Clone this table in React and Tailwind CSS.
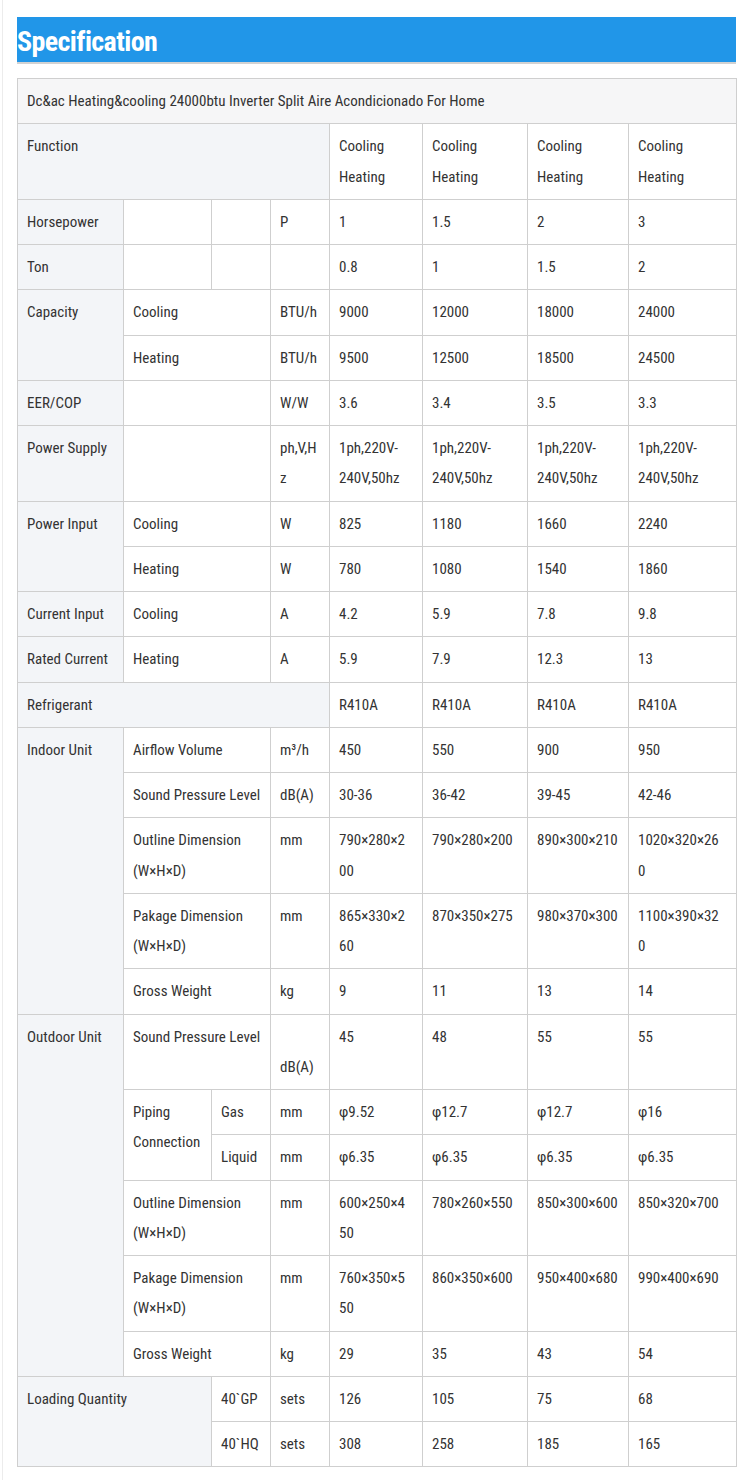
import React from "react";

const F = { fontFamily: '"Roboto Condensed", "Roboto", "Liberation Sans", sans-serif' };

const c = (t, o = {}) => ({ t, ...o });
const vals = (a) => a.map((v) => c(v));
const CH = "Cooling\nHeating";
const PS = "1ph,220V-\n240V,50hz";

const rows = [
  [c("Function", { cs: 4, g: true }), ...vals([CH, CH, CH, CH])],
  [c("Horsepower", { g: true }), c(""), c(""), c("P"), ...vals(["1", "1.5", "2", "3"])],
  [c("Ton", { g: true }), c(""), c(""), c(""), ...vals(["0.8", "1", "1.5", "2"])],
  [c("Capacity", { g: true, rs: 2 }), c("Cooling", { cs: 2 }), c("BTU/h"), ...vals(["9000", "12000", "18000", "24000"])],
  [c("Heating", { cs: 2 }), c("BTU/h"), ...vals(["9500", "12500", "18500", "24500"])],
  [c("EER/COP", { g: true }), c("", { cs: 2 }), c("W/W"), ...vals(["3.6", "3.4", "3.5", "3.3"])],
  [c("Power Supply", { g: true }), c("", { cs: 2 }), c("ph,V,H\nz"), ...vals([PS, PS, PS, PS])],
  [c("Power Input", { g: true, rs: 2 }), c("Cooling", { cs: 2 }), c("W"), ...vals(["825", "1180", "1660", "2240"])],
  [c("Heating", { cs: 2 }), c("W"), ...vals(["780", "1080", "1540", "1860"])],
  [c("Current Input", { g: true }), c("Cooling", { cs: 2 }), c("A"), ...vals(["4.2", "5.9", "7.8", "9.8"])],
  [c("Rated Current", { g: true }), c("Heating", { cs: 2 }), c("A"), ...vals(["5.9", "7.9", "12.3", "13"])],
  [c("Refrigerant", { cs: 4, g: true }), ...vals(["R410A", "R410A", "R410A", "R410A"])],
  [c("Indoor Unit", { g: true, rs: 5 }), c("Airflow Volume", { cs: 2 }), c("m³/h"), ...vals(["450", "550", "900", "950"])],
  [c("Sound Pressure Level", { cs: 2 }), c("dB(A)"), ...vals(["30-36", "36-42", "39-45", "42-46"])],
  [c("Outline Dimension\n(W×H×D)", { cs: 2 }), c("mm"), ...vals(["790×280×2\n00", "790×280×200", "890×300×210", "1020×320×26\n0"])],
  [c("Pakage Dimension\n(W×H×D)", { cs: 2 }), c("mm"), ...vals(["865×330×2\n60", "870×350×275", "980×370×300", "1100×390×32\n0"])],
  [c("Gross Weight", { cs: 2 }), c("kg"), ...vals(["9", "11", "13", "14"])],
  [c("Outdoor Unit", { g: true, rs: 6 }), c("Sound Pressure Level", { cs: 2 }), c("\ndB(A)"), ...vals(["45", "48", "55", "55"])],
  [c("Piping\nConnection", { rs: 2 }), c("Gas"), c("mm"), ...vals(["φ9.52", "φ12.7", "φ12.7", "φ16"])],
  [c("Liquid"), c("mm"), ...vals(["φ6.35", "φ6.35", "φ6.35", "φ6.35"])],
  [c("Outline Dimension\n(W×H×D)", { cs: 2 }), c("mm"), ...vals(["600×250×4\n50", "780×260×550", "850×300×600", "850×320×700"])],
  [c("Pakage Dimension\n(W×H×D)", { cs: 2 }), c("mm"), ...vals(["760×350×5\n50", "860×350×600", "950×400×680", "990×400×690"])],
  [c("Gross Weight", { cs: 2 }), c("kg"), ...vals(["29", "35", "43", "54"])],
  [c("Loading Quantity", { cs: 2, rs: 2, g: true }), c("40`GP"), c("sets"), ...vals(["126", "105", "75", "68"])],
  [c("40`HQ"), c("sets"), ...vals(["308", "258", "185", "165"])],
];

export default function App() {
  return (
    <div className="w-[750px] min-h-[1480px] bg-white text-[#333333] [font-stretch:80%]" style={F}>
      <div className="ml-[2px] min-h-[1480px] border-l border-[#ececec] pl-[14px] pt-[17px]">
        <div className="w-[719px] h-[47px] bg-[#2196e8] border-b-2 border-[#d2d2d2] flex items-end pb-[6px]">
          <h2 className="text-white font-bold text-[28px] leading-none tracking-[-0.6px] [font-stretch:75%]">Specification</h2>
        </div>
        <table className="mt-[14px] w-[719px] table-fixed border-collapse text-[15px] leading-[30.25px]">
          <colgroup>
            <col className="w-[106px]" />
            <col className="w-[88px]" />
            <col className="w-[59px]" />
            <col className="w-[59px]" />
            <col className="w-[93px]" />
            <col className="w-[105px]" />
            <col className="w-[101px]" />
            <col className="w-[108px]" />
          </colgroup>
          <tbody>
            <tr>
              <td colSpan={8} className="border border-[#cfcfcf] bg-[#f6f6f7] pl-[9px] pr-[10px] py-[7px] align-top">
                Dc&amp;ac Heating&amp;cooling 24000btu Inverter Split Aire Acondicionado For Home
              </td>
            </tr>
            {rows.map((r, i) => (
              <tr key={i}>
                {r.map((cell, j) => (
                  <td
                    key={j}
                    colSpan={cell.cs || 1}
                    rowSpan={cell.rs || 1}
                    className={
                      "border border-[#cfcfcf] pl-[9px] pr-[4px] py-[7px] whitespace-pre align-top " +
                      (cell.g ? "bg-[#f3f5f8]" : "bg-white")
                    }
                  >
                    {cell.t}
                  </td>
                ))}
              </tr>
            ))}
          </tbody>
        </table>
      </div>
    </div>
  );
}
